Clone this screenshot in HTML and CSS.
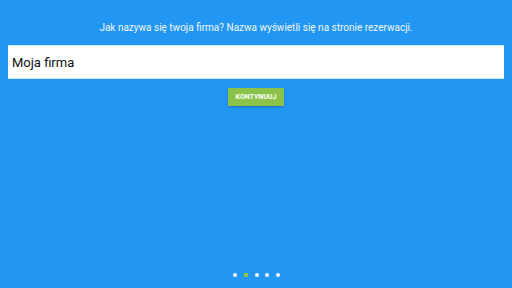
FILE: index.html
```html
<!DOCTYPE html>
<html lang="pl">
<head>
  <meta charset="UTF-8" />
  <title>Nazwa firmy</title>
  <link rel="stylesheet" href="styles.css">
</head>
<body>
  <div class="screen">
    <p class="question">Jak nazywa się twoja firma? Nazwa wyświetli się na stronie rezerwacji.</p>
    <input type="text" class="name-input" value="Moja firma" />
    <button type="button" class="next-button">KONTYNUUJ</button>
    <div class="pager">
      <span class="dot"></span>
      <span class="dot active"></span>
      <span class="dot"></span>
      <span class="dot"></span>
      <span class="dot"></span>
    </div>
  </div>
</body>
</html>
```

FILE: styles.css
```css
body {
  margin: 0;
  background-color: #2196F3;
  font-family: 'Roboto', 'Liberation Sans', sans-serif;
  color: white;
}
.screen {
  height: 288px;
  display: flex;
  flex-direction: column;
  align-items: center;
  padding: 0 8px;
  box-sizing: border-box;
}
.question {
  font-size: 10px;
  margin: 21px 0 0;
  line-height: 14px;
  color: #f2f8fe;
}
.name-input {
  width: 100%;
  box-sizing: border-box;
  height: 34px;
  margin-top: 10px;
  padding: 0 4px;
  border: none;
  border-top: 1px solid #cfe6fb;
  border-bottom: 1px solid #cfe6fb;
  font-family: inherit;
  font-size: 13px;
  color: #111;
  background: white;
  outline: none;
}
.next-button {
  margin-top: 9px;
  width: 56px;
  height: 18px;
  padding: 0;
  border: none;
  border-radius: 1px;
  background-color: #8BC34A;
  color: white;
  font-family: inherit;
  font-size: 7px;
  font-weight: bold;
  box-shadow: 0 1px 2px rgba(0, 0, 0, 0.25);
}
.pager {
  margin-top: auto;
  margin-bottom: 11px;
  display: flex;
  gap: 6.7px;
  padding-left: 1px;
}
.dot {
  width: 4px;
  height: 4px;
  border-radius: 50%;
  background: white;
}
.dot.active {
  background: #8BC34A;
  border-radius: 0;
}
```
